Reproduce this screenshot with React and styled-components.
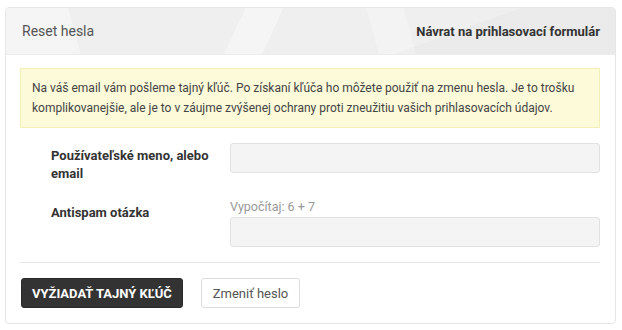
import React from "react";
import styled, { createGlobalStyle } from "styled-components";

const Global = createGlobalStyle`
  html, body { margin: 0; padding: 0; background: #fff; }
  body { font-family: Roboto, "Noto Sans", "Liberation Sans", sans-serif; color: #333; }
  * { box-sizing: border-box; }
`;

const Card = styled.div`
  margin: 7px 6px 0 5px;
  border: 1px solid #e6e6e6;
  border-radius: 4px;
  background: #fff;
  overflow: hidden;
`;

const Header = styled.div`
  height: 47px;
  display: flex;
  align-items: center;
  justify-content: space-between;
  padding: 0 15px 0 16px;
  border-bottom: 1px solid #ececec;
  background-color: #efefef;
  background-image:
    linear-gradient(115deg, transparent 0 38%, rgba(255,255,255,0.4) 38% 44%, transparent 44%),
    linear-gradient(75deg, rgba(255,255,255,0.35) 0 12%, transparent 12% 60%, rgba(255,255,255,0.25) 60% 66%, transparent 66%),
    linear-gradient(160deg, transparent 0 70%, rgba(0,0,0,0.02) 70%);
`;

const Title = styled.div`
  font-size: 14px;
  color: #555;
`;

const BackLink = styled.a`
  font-size: 13px;
  font-weight: 700;
  color: #333;
  text-decoration: none;
`;

const Body = styled.div`
  padding: 13px 15px 15px 14px;
`;

const Alert = styled.div`
  background: #fcfad9;
  border: 1px solid #f3efb6;
  padding: 9px 11px;
  font-size: 12px;
  line-height: 20px;
  color: #444;
`;

const Form = styled.div`
  display: flex;
  flex-direction: column;
  gap: 15px;
  padding: 15px 0 15px;
  border-bottom: 1px solid #e5e5e5;
`;

const Row = styled.div`
  display: grid;
  grid-template-columns: 210px 1fr;
  align-items: start;
`;

const Label = styled.label`
  padding: ${(p) => p.$top}px 20px 0 31px;
  font-size: 13px;
  font-weight: 700;
  line-height: 18px;
  color: #333;
`;

const Field = styled.div`
  display: flex;
  flex-direction: column;
  gap: 2px;
`;

const Hint = styled.div`
  font-size: 12.5px;
  line-height: 17px;
  color: #999;
`;

const Input = styled.input`
  height: 30px;
  width: 100%;
  border: 1px solid #e1e1e1;
  border-radius: 3px;
  background: #f4f4f4;
  font: inherit;
  padding: 0 8px;
  outline: none;
`;

const Actions = styled.div`
  display: flex;
  gap: 18px;
  padding-top: 15px;
  padding-left: 1px;
`;

const Button = styled.button`
  height: 30px;
  border-radius: 3px;
  font-family: inherit;
  font-size: 13px;
  cursor: pointer;
  padding: 0 ${(p) => (p.$primary ? 10 : 11)}px;
  ${(p) =>
    p.$primary
      ? `background: #333; color: #fff; border: 1px solid #2a2a2a; font-weight: 700; text-transform: uppercase;`
      : `background: #fff; color: #555; border: 1px solid #ddd; font-weight: 400;`}
`;

export default function App() {
  return (
    <>
      <Global />
      <Card>
        <Header>
          <Title>Reset hesla</Title>
          <BackLink href="#">Návrat na prihlasovací formulár</BackLink>
        </Header>
        <Body>
          <Alert>
            Na váš email vám pošleme tajný kľúč. Po získaní kľúča ho môžete použiť na zmenu hesla. Je to trošku
            komplikovanejšie, ale je to v záujme zvýšenej ochrany proti zneužitiu vašich prihlasovacích údajov.
          </Alert>
          <Form>
            <Row>
              <Label $top={4}>Používateľské meno, alebo email</Label>
              <Field>
                <Input type="text" />
              </Field>
            </Row>
            <Row>
              <Label $top={6}>Antispam otázka</Label>
              <Field>
                <Hint>Vypočítaj: 6 + 7</Hint>
                <Input type="text" />
              </Field>
            </Row>
          </Form>
          <Actions>
            <Button $primary>Vyžiadať tajný kľúč</Button>
            <Button>Zmeniť heslo</Button>
          </Actions>
        </Body>
      </Card>
    </>
  );
}
